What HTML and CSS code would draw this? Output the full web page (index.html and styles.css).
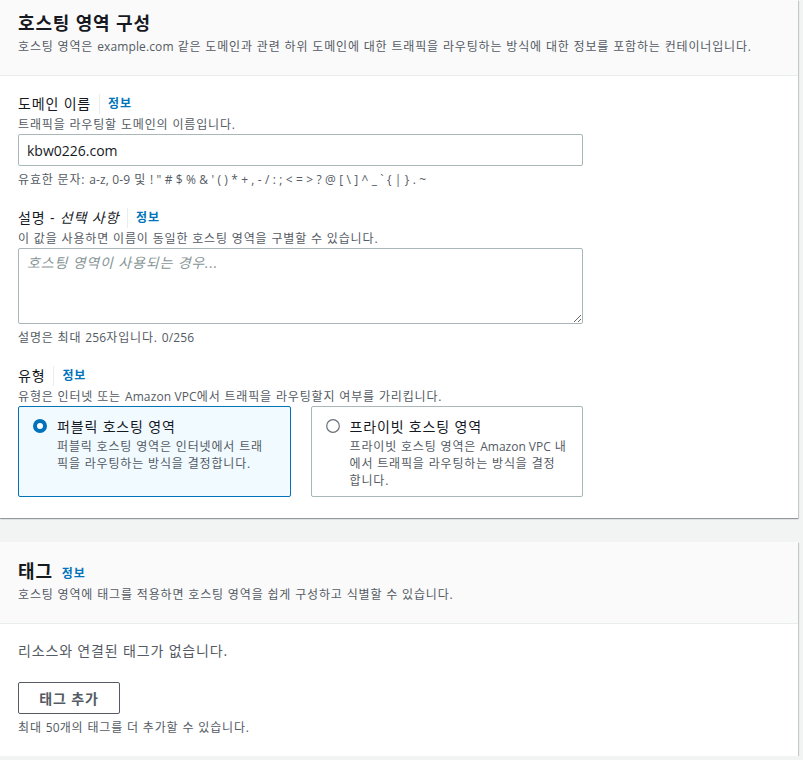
FILE: index.html
```html
<!DOCTYPE html>
<html lang="ko">
<head>
<meta charset="utf-8">
<title>호스팅 영역 구성</title>
<link rel="stylesheet" href="styles.css">
</head>
<body>
<div class="page">
  <section class="panel panel-first">
    <header class="panel-header">
      <h2 class="panel-title">호스팅 영역 구성</h2>
      <p class="panel-desc">호스팅 영역은 <span class="en">example.com</span> 같은 도메인과 관련 하위 도메인에 대한 트래픽을 라우팅하는 방식에 대한 정보를 포함하는 컨테이너입니다.</p>
    </header>
    <div class="panel-body">
      <div class="field">
        <div class="field-label"><span class="label-text">도메인 이름</span><a class="info">정보</a></div>
        <div class="field-desc">트래픽을 라우팅할 도메인의 이름입니다.</div>
        <input class="input" type="text" value="kbw0226.com">
        <div class="field-hint">유효한 문자: <span class="en">a-z, 0-9</span> 및 <span class="en">! " # $ % &amp; ' ( ) * + , - / : ; &lt; = &gt; ? @ [ \ ] ^ _ ` { | } . ~</span></div>
      </div>
      <div class="field">
        <div class="field-label"><span class="label-text">설명 - <i>선택 사항</i></span><a class="info">정보</a></div>
        <div class="field-desc">이 값을 사용하면 이름이 동일한 호스팅 영역을 구별할 수 있습니다.</div>
        <textarea class="textarea" placeholder="호스팅 영역이 사용되는 경우..."></textarea>
        <div class="field-hint">설명은 최대 <span class="en">256</span>자입니다. <span class="en">0/256</span></div>
      </div>
      <div class="field">
        <div class="field-label"><span class="label-text">유형</span><a class="info">정보</a></div>
        <div class="field-desc">유형은 인터넷 또는 <span class="en">Amazon VPC</span>에서 트래픽을 라우팅할지 여부를 가리킵니다.</div>
        <div class="tiles">
          <div class="tile tile-selected">
            <svg class="radio" width="14" height="14" viewBox="0 0 14 14"><circle cx="7" cy="7" r="5" fill="#fff" stroke="#0073bb" stroke-width="4"/></svg>
            <div class="tile-text">
              <div class="tile-title">퍼블릭 호스팅 영역</div>
              <div class="tile-desc">퍼블릭 호스팅 영역은 인터넷에서 트래픽을 라우팅하는 방식을 결정합니다.</div>
            </div>
          </div>
          <div class="tile">
            <svg class="radio" width="14" height="14" viewBox="0 0 14 14"><circle cx="7" cy="7" r="6.3" fill="#fff" stroke="#687078" stroke-width="1.2"/></svg>
            <div class="tile-text">
              <div class="tile-title">프라이빗 호스팅 영역</div>
              <div class="tile-desc">프라이빗 호스팅 영역은 <span class="en tight">Amazon VPC</span> 내에서 트래픽을 라우팅하는 방식을 결정합니다.</div>
            </div>
          </div>
        </div>
      </div>
    </div>
  </section>

  <section class="panel panel-second">
    <header class="panel-header">
      <div class="title-row"><h2 class="panel-title">태그</h2><a class="info">정보</a></div>
      <p class="panel-desc">호스팅 영역에 태그를 적용하면 호스팅 영역을 쉽게 구성하고 식별할 수 있습니다.</p>
    </header>
    <div class="panel-body tags-body">
      <p class="empty">리소스와 연결된 태그가 없습니다.</p>
      <button class="btn" type="button">태그 추가</button>
      <div class="field-hint">최대 <span class="en">50</span>개의 태그를 더 추가할 수 있습니다.</div>
    </div>
  </section>
</div>
</body>
</html>
```

FILE: styles.css
```css
html, body {
  margin: 0;
  padding: 0;
  background: #f2f3f3;
}
body {
  font-family: "Open Sans", "Noto Sans CJK KR", sans-serif;
  color: #16191f;
  font-size: 14px;
  letter-spacing: 0.06em;
}
.en {
  letter-spacing: 0.01em;
}
.en.tight {
  letter-spacing: 0;
}
.page {
  width: 798px;
  display: flex;
  flex-direction: column;
  gap: 24px;
}
.panel {
  background: #fff;
  box-shadow: 0 1px 1px 0 rgba(0, 28, 36, 0.3), 1px 1px 1px 0 rgba(0, 28, 36, 0.15);
}
.panel-header {
  background: #fafafa;
  border-bottom: 1px solid #eaeded;
  padding: 0 18px;
}
.panel-first .panel-header {
  padding-top: 12px;
  padding-bottom: 20px;
}
.panel-second .panel-header {
  padding-top: 18px;
  padding-bottom: 20px;
}
.title-row {
  display: flex;
  align-items: baseline;
  gap: 9px;
  height: 22px;
}
.panel-title {
  margin: 0;
  font-size: 18px;
  line-height: 22px;
  font-weight: 700;
  color: #16191f;
}
.panel-desc {
  margin: 5px 0 0;
  font-size: 12px;
  line-height: 16px;
  color: #545b64;
}
.panel-body {
  padding: 16px 18px 21px;
  display: flex;
  flex-direction: column;
  gap: 18px;
}
.field {
  display: flex;
  flex-direction: column;
  width: 565px;
}
.field-label {
  display: flex;
  align-items: center;
  font-size: 14px;
  line-height: 20px;
  padding-top: 2px;
}
.label-text {
  padding-right: 8px;
  margin-right: 8px;
  border-right: 1px solid #eaeded;
}
.info {
  color: #0073bb;
  font-size: 12px;
  font-weight: 700;
  text-decoration: none;
}
.field-desc {
  font-size: 12px;
  line-height: 18px;
  padding-top: 2px;
  color: #545b64;
}
.field-hint {
  font-size: 12px;
  line-height: 16px;
  color: #545b64;
  margin-top: 6px;
}
.input, .textarea {
  box-sizing: border-box;
  width: 565px;
  border: 1px solid #aab7b8;
  border-radius: 2px;
  font-family: "Open Sans", "Noto Sans CJK KR", sans-serif;
  font-size: 14px;
  color: #16191f;
  background: #fff;
  margin: 0;
}
.input {
  height: 32px;
  padding: 0 8px;
}
.textarea {
  display: block;
  height: 76px;
  padding: 4px 8px;
  line-height: 20px;
  letter-spacing: 0.06em;
  resize: vertical;
}
.textarea::placeholder {
  color: #879596;
  font-style: italic;
}
.tiles {
  display: grid;
  grid-template-columns: 1fr 1fr;
  gap: 20px;
}
.tile {
  display: flex;
  align-items: flex-start;
  gap: 10px;
  border: 1px solid #aab7b8;
  border-radius: 2px;
  padding: 10px 15px 7px 14px;
}
.tile-selected {
  background: #f1faff;
  border-color: #0073bb;
}
.radio {
  flex: none;
  margin-top: 2px;
}
.tile-title {
  font-size: 14px;
  line-height: 20px;
}
.tile-desc {
  margin-top: 1px;
  font-size: 12px;
  line-height: 17px;
  color: #545b64;
}
.tags-body {
  gap: 0;
  padding-top: 17px;
  padding-bottom: 20px;
}
.empty {
  margin: 0 0 21px;
  font-size: 14px;
  line-height: 20px;
  color: #545b64;
}
.btn {
  align-self: flex-start;
  box-sizing: border-box;
  width: 102px;
  height: 32px;
  background: #fff;
  border: 1px solid #545b64;
  border-radius: 2px;
  font-family: "Open Sans", "Noto Sans CJK KR", sans-serif;
  font-size: 14px;
  font-weight: 700;
  letter-spacing: 0.06em;
  color: #545b64;
  padding: 0;
}
```
